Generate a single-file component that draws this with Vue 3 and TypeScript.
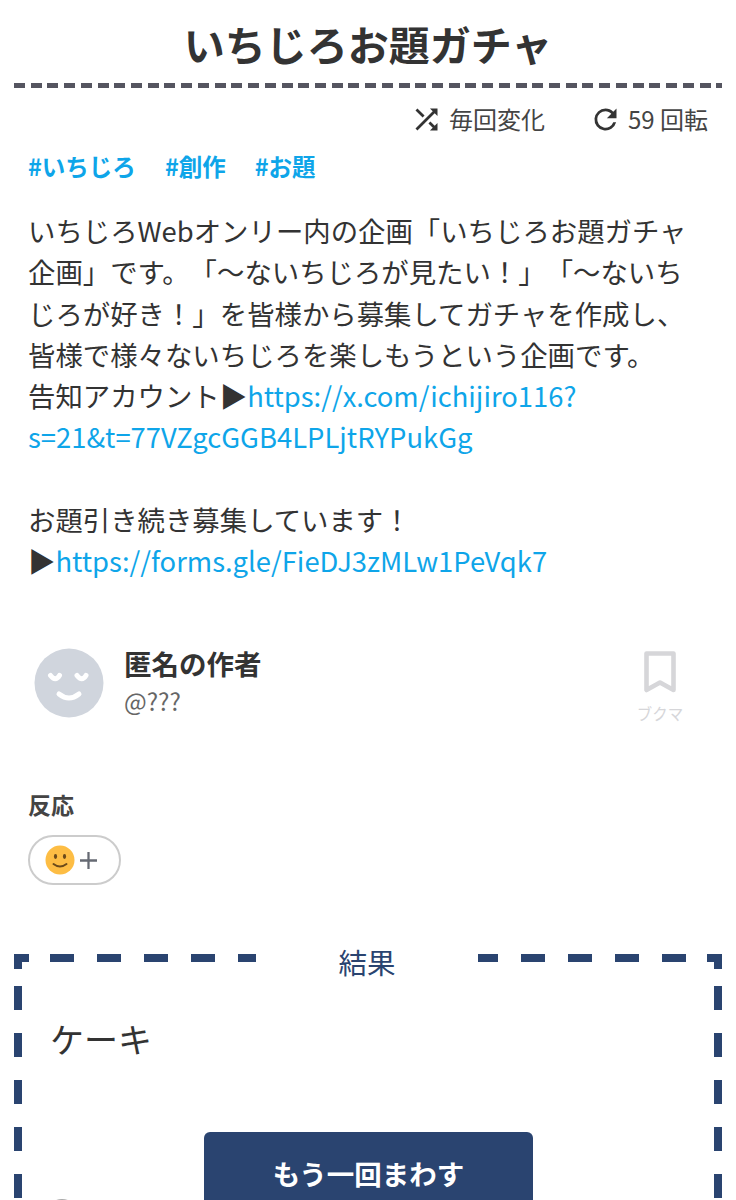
<template>
  <div class="page">
    <h1 class="title">いちじろお題ガチャ</h1>
    <div class="title-rule"></div>

    <div class="meta">
      <span class="meta-item">
        <svg class="meta-icon" viewBox="0 0 24 24" fill="currentColor">
          <path d="M10.59 9.17 5.41 4 4 5.41l5.17 5.17 1.42-1.41zM14.5 4l2.04 2.04L4 18.59 5.41 20 17.96 7.46 20 9.5V4h-5.5zm.33 9.41-1.41 1.41 3.13 3.13L14.5 20H20v-5.5l-2.04 2.04-3.13-3.13z" />
        </svg>
        毎回変化
      </span>
      <span class="meta-item">
        <svg class="meta-icon" viewBox="0 0 24 24" fill="currentColor">
          <path d="M17.65 6.35A7.96 7.96 0 0 0 12 4a8 8 0 1 0 7.73 10h-2.08A6 6 0 1 1 12 6c1.66 0 3.14.69 4.22 1.78L13 11h7V4l-2.35 2.35z" />
        </svg>
        59 回転
      </span>
    </div>

    <div class="tags">
      <a v-for="tag in tags" :key="tag" class="tag">#{{ tag }}</a>
    </div>

    <p class="desc">いちじろWebオンリー内の企画「いちじろお題ガチャ企画」です。「〜ないちじろが見たい！」「〜ないちじろが好き！」を皆様から募集してガチャを作成し、皆様で様々ないちじろを楽しもうという企画です。<br />告知アカウント▶<a class="link">https://x.com/ichijiro116?<br />s=21&amp;t=77VZgcGGB4LPLjtRYPukGg</a><br /><br />お題引き続き募集しています！<br />▶<a class="link">https://forms.gle/FieDJ3zMLw1PeVqk7</a></p>

    <div class="author">
      <svg class="avatar" viewBox="0 0 70 70">
        <circle cx="35" cy="35" r="34.5" fill="#d0d5dd" />
        <path d="M16.500 27.500q5 6.500 9 0M43 27.500q5 6.500 9 0M25 46q10 8 20 0" fill="none" stroke="#fff" stroke-width="5" stroke-linecap="round" />
      </svg>
      <div class="author-text">
        <div class="author-name">匿名の作者</div>
        <div class="author-id">@???</div>
      </div>
      <div class="bookmark">
        <svg class="bookmark-icon" viewBox="0 0 34 44">
          <path d="M3.500 3.500h27v36.500L17 32.500 3.500 40z" fill="none" stroke="currentColor" stroke-width="4.600" stroke-linejoin="round" />
        </svg>
        <span>ブクマ</span>
      </div>
    </div>

    <div class="reaction-label">反応</div>
    <button class="reaction-btn">
      <svg class="smile" viewBox="0 0 30 30">
        <circle cx="15" cy="15" r="14.500" fill="#fdbd44" />
        <ellipse cx="10.500" cy="11.500" rx="1.600" ry="2.400" fill="#6b4a1a" />
        <ellipse cx="19.500" cy="11.500" rx="1.600" ry="2.400" fill="#6b4a1a" />
        <path d="M8.500 19q6.500 5 13 0" fill="none" stroke="#6b4a1a" stroke-width="2" stroke-linecap="round" />
      </svg>
      <svg class="plus" viewBox="0 0 18 18">
        <path d="M9 0v18M0 9h18" stroke="#666a73" stroke-width="2.400" />
      </svg>
    </button>

    <section class="result">
      <div class="result-label">結果</div>
      <div class="result-text">ケーキ</div>
      <button class="again">もう一回まわす</button>
      <span class="share"></span>
    </section>
  </div>
</template>

<script setup lang="ts">
const tags: string[] = ["いちじろ", "創作", "お題"]
</script>

<style>
body {
  margin: 0;
  background: #fff;
}
</style>

<style scoped>
.page {
  height: 1200px;
  overflow: hidden;
  box-sizing: border-box;
  padding: 0 14px;
  color: #333;
  font-family: "Noto Sans CJK JP", "Noto Sans", sans-serif;
  text-spacing-trim: space-all;
}

.title {
  margin: 0;
  padding-top: 13px;
  height: 83px;
  box-sizing: border-box;
  text-align: center;
  font-size: 41px;
  line-height: 60px;
  font-weight: 700;
}

.title-rule {
  height: 5px;
  background: repeating-linear-gradient(90deg, #555560 0 11px, transparent 11px 16.72px);
}

.meta {
  display: flex;
  justify-content: flex-end;
  gap: 47px;
  height: 36px;
  margin-top: 13px;
  padding-right: 14px;
  font-size: 24px;
  line-height: 36px;
  color: #444;
}

.meta-item {
  display: flex;
  align-items: center;
  gap: 6px;
}

.meta-icon {
  width: 33px;
  height: 33px;
  margin-left: -3px;
  color: #333;
}

.tags {
  display: flex;
  gap: 29px;
  margin: 11px 14px 0;
  font-size: 23.500px;
  line-height: 36px;
  font-weight: 700;
  color: #0ea5e9;
}

.desc {
  margin: 26px 14px 0;
  font-size: 27.400px;
  line-height: 41.250px;
  color: #333;
}

.link {
  color: #0ea5e9;
}

.author {
  display: flex;
  align-items: flex-start;
  margin: 67px 14px 0 20px;
}

.avatar {
  width: 70px;
  height: 70px;
  flex: none;
}

.author-text {
  flex: 1;
  margin-left: 20px;
  margin-top: -5px;
}

.author-name {
  font-size: 27.500px;
  line-height: 40px;
  font-weight: 700;
}

.author-id {
  font-size: 24px;
  line-height: 36px;
  color: #666;
}

.bookmark {
  display: flex;
  flex-direction: column;
  align-items: center;
  width: 50px;
  margin-right: 23px;
  margin-top: 2px;
  color: #d6d6d9;
  font-size: 15.500px;
  line-height: 22px;
}

.bookmark-icon {
  width: 34px;
  height: 44px;
  margin-bottom: 8px;
}

.reaction-label {
  margin: 63px 14px 0;
  font-size: 23px;
  line-height: 34px;
  font-weight: 700;
  color: #444;
}

.reaction-btn {
  display: flex;
  align-items: center;
  gap: 5px;
  width: 93px;
  height: 50px;
  margin: 14px 14px 0;
  padding: 0 0 0 15px;
  box-sizing: border-box;
  background: #fff;
  border: 2px solid #ccc;
  border-radius: 25px;
}

.smile {
  width: 30px;
  height: 30px;
  flex: none;
}

.plus {
  width: 17px;
  height: 17px;
  flex: none;
}

/* dashes come from gradients, a dashed border can't do 24px on 23px off */
.result {
  position: relative;
  height: 400px;
  margin-top: 69px;
  background:
    linear-gradient(#2a4470, #2a4470) 0 0 / 15px 8px no-repeat,
    linear-gradient(#2a4470, #2a4470) 100% 0 / 15px 8px no-repeat,
    repeating-linear-gradient(90deg, #2a4470 0 13px, transparent 13px 36px, #2a4470 36px 47.050px) 0 0 / 100% 8px no-repeat,
    repeating-linear-gradient(180deg, #2a4470 0 15px, transparent 15px 32px, #2a4470 32px 56px, transparent 56px 79px, #2a4470 79px 103px, transparent 103px 126px, #2a4470 126px 150px, transparent 150px 173px, #2a4470 173px 197px, transparent 197px 220px, #2a4470 220px 244px, transparent 244px 400px) 0 0 / 8px 100% no-repeat,
    repeating-linear-gradient(180deg, #2a4470 0 15px, transparent 15px 32px, #2a4470 32px 56px, transparent 56px 79px, #2a4470 79px 103px, transparent 103px 126px, #2a4470 126px 150px, transparent 150px 173px, #2a4470 173px 197px, transparent 197px 220px, #2a4470 220px 244px, transparent 244px 400px) 100% 0 / 8px 100% no-repeat;
}

.result-label {
  position: absolute;
  top: -13px;
  left: 242px;
  width: 222px;
  background: #fff;
  text-align: center;
  font-size: 28.500px;
  line-height: 42px;
  color: #2a4470;
}

.result-text {
  position: absolute;
  top: 60px;
  left: 36px;
  font-size: 34px;
  line-height: 50px;
}

.again {
  position: absolute;
  top: 178px;
  left: 190px;
  width: 329px;
  height: 82px;
  background: #2a4470;
  border: 0;
  border-radius: 6px;
  color: #fff;
  font-family: inherit;
  font-size: 27.500px;
  font-weight: 700;
}

.share {
  position: absolute;
  top: 245px;
  left: 31px;
  width: 34px;
  height: 34px;
  border-radius: 50%;
  background: #aaa;
}
</style>
